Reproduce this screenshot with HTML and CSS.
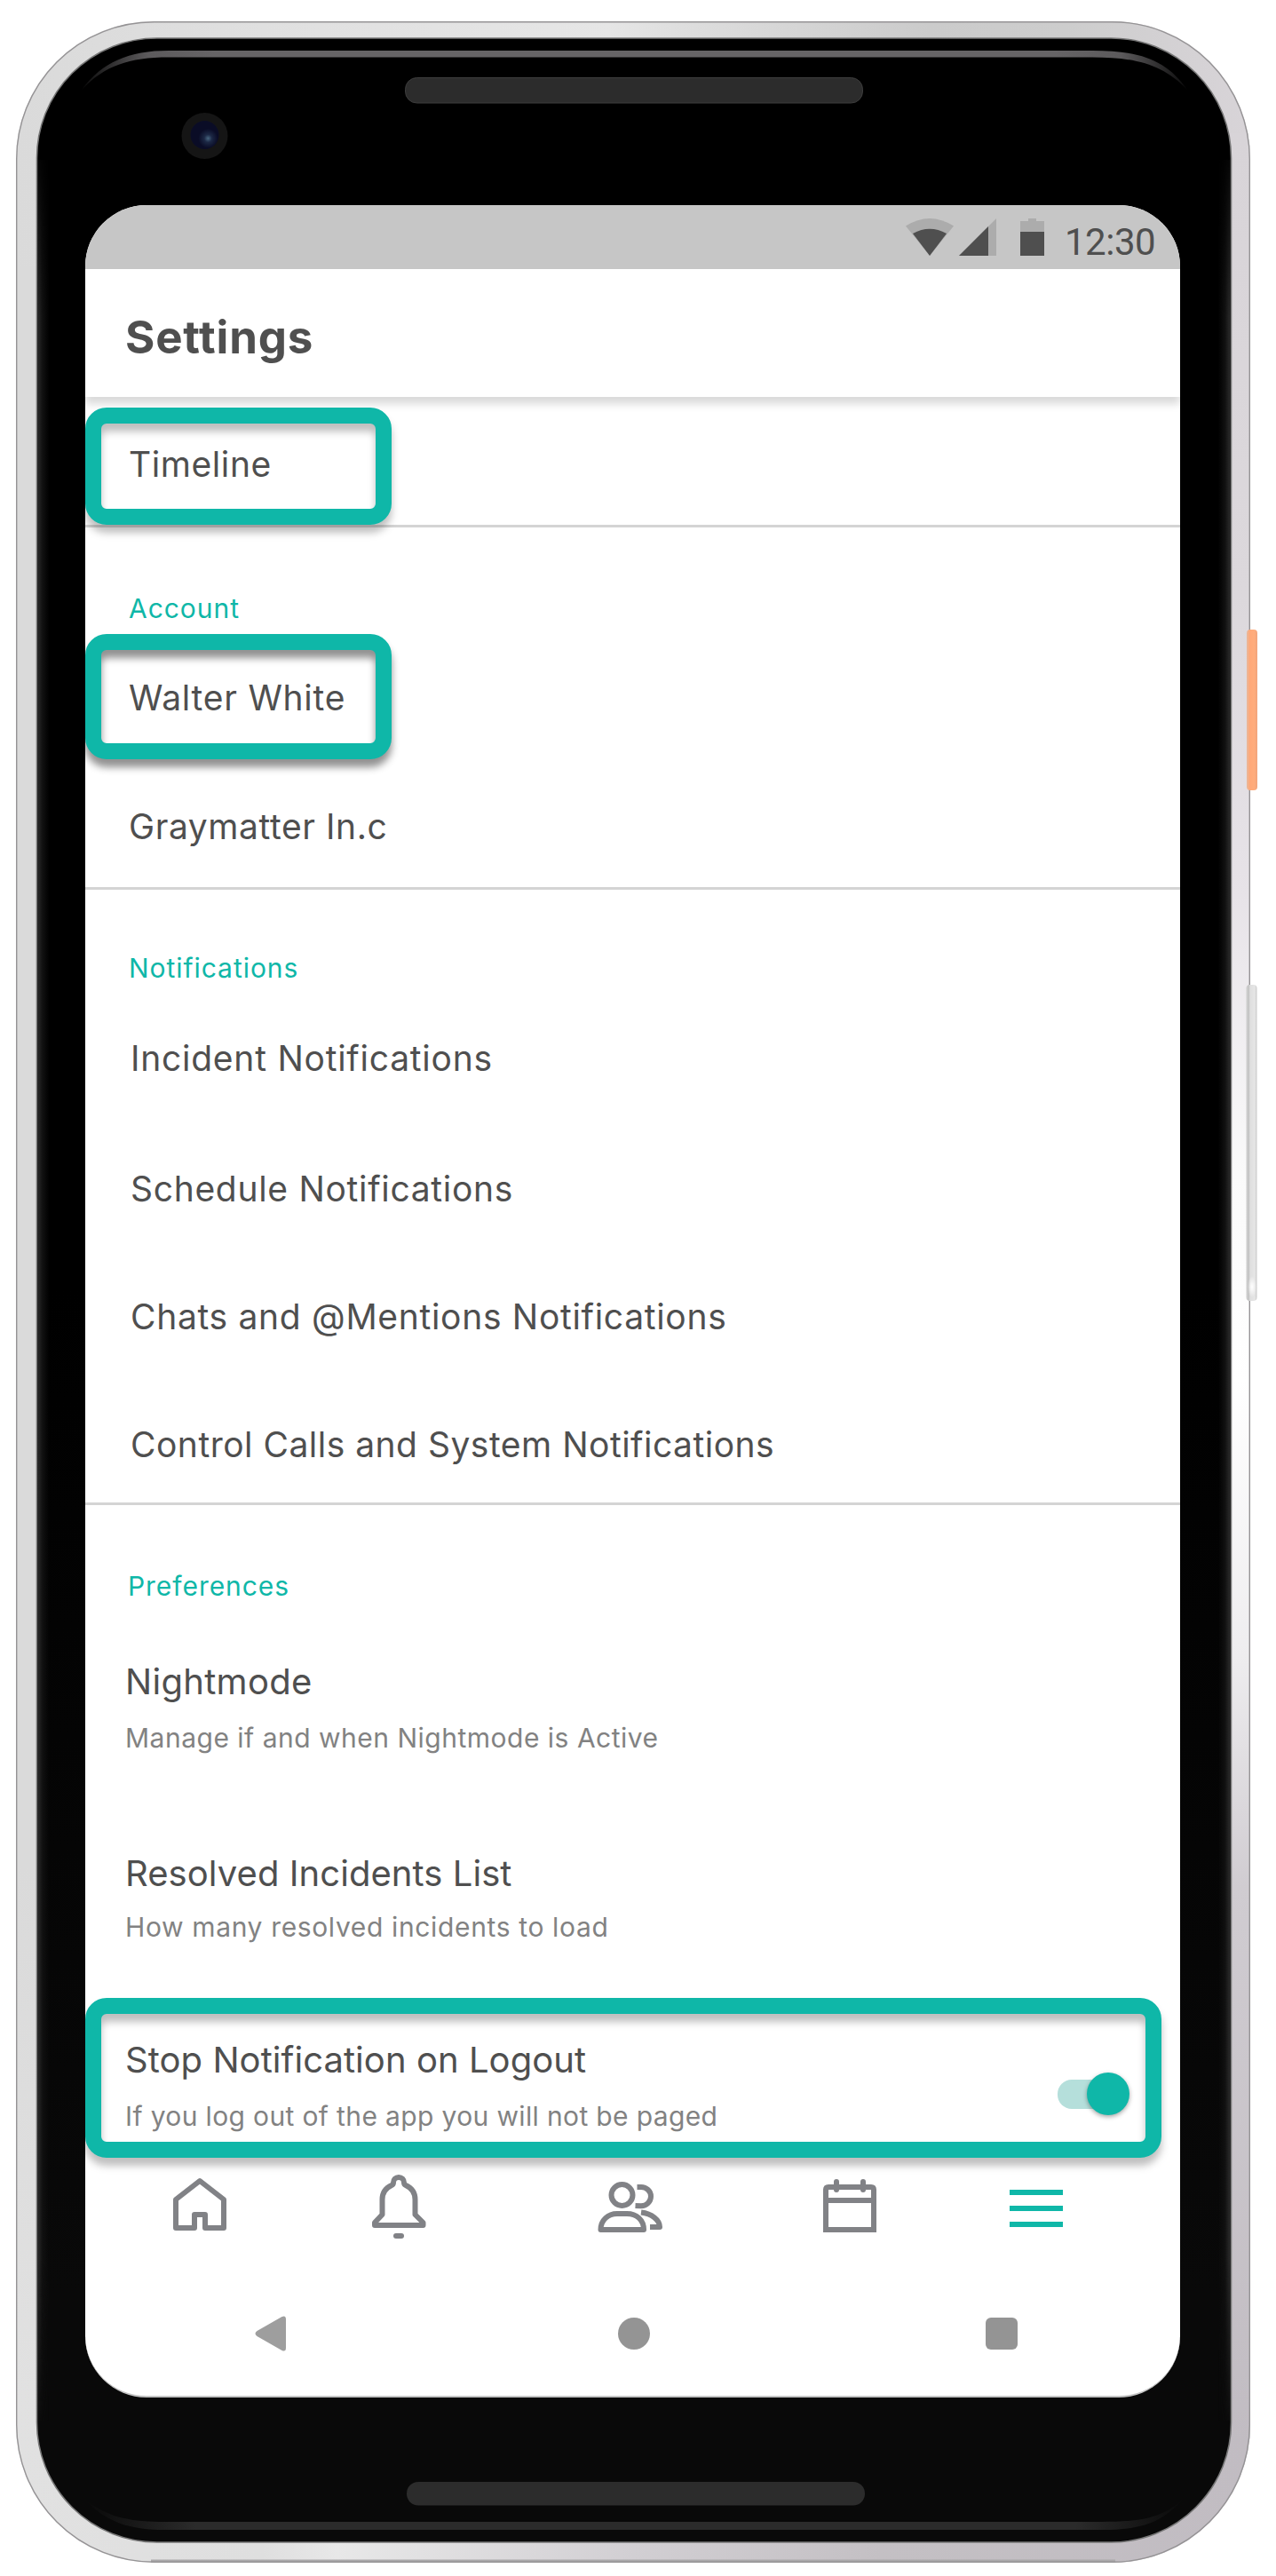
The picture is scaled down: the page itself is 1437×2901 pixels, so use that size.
FILE: index.html
```html
<!DOCTYPE html>
<html lang="en">
<head>
<meta charset="utf-8">
<title>Settings</title>
<link rel="stylesheet" href="styles.css">
</head>
<body>
<div class="device">
  <svg class="frame" width="1437" height="2901" viewBox="0 0 1437 2901" aria-hidden="true">
    <defs>
      <linearGradient id="metal" x1="0" x2="1" y1="0" y2="0">
        <stop offset="0" stop-color="#dadada"/><stop offset=".2" stop-color="#e0e0e0"/>
        <stop offset=".48" stop-color="#e6e6e6"/><stop offset=".54" stop-color="#dedede"/><stop offset=".74" stop-color="#cbcbcb"/>
        <stop offset=".85" stop-color="#cdcdcd"/><stop offset="1" stop-color="#d8d4d8"/>
      </linearGradient>
      <linearGradient id="metalBottom" x1="0" x2="1" y1="0" y2="0">
        <stop offset="0" stop-color="#e1e1e1"/><stop offset=".2" stop-color="#dfdfdf"/>
        <stop offset=".26" stop-color="#e8e8e8"/><stop offset=".5" stop-color="#d2cfd3"/>
        <stop offset=".7" stop-color="#c4c0c4"/><stop offset="1" stop-color="#c1bcc2"/>
      </linearGradient>
      <linearGradient id="sideLeft" gradientUnits="userSpaceOnUse" x1="0" x2="0" y1="300" y2="2700">
        <stop offset="0" stop-color="#dadada"/><stop offset=".75" stop-color="#dadada"/><stop offset="1" stop-color="#e1e1e1"/>
      </linearGradient>
      <linearGradient id="side" gradientUnits="userSpaceOnUse" x1="0" x2="0" y1="150" y2="2750">
        <stop offset="0" stop-color="#d8d4d8"/><stop offset=".2" stop-color="#dcd8dc"/>
        <stop offset=".33" stop-color="#e7e3e8"/><stop offset=".45" stop-color="#fafafa"/>
        <stop offset=".54" stop-color="#ffffff"/><stop offset=".66" stop-color="#eeedef"/><stop offset=".76" stop-color="#d0ccd1"/>
        <stop offset="1" stop-color="#c1bcc2"/>
      </linearGradient>
      <linearGradient id="glass" gradientUnits="userSpaceOnUse" x1="0" x2="0" y1="43" y2="2863">
        <stop offset="0" stop-color="#000"/><stop offset=".5" stop-color="#000"/><stop offset=".9" stop-color="#090909"/><stop offset="1" stop-color="#090909"/>
      </linearGradient>
      <linearGradient id="edgeL" x1="0" x2="1" y1="0" y2="0">
        <stop offset="0" stop-color="#2a2a2a"/><stop offset=".4" stop-color="#111"/><stop offset="1" stop-color="#111" stop-opacity="0"/>
      </linearGradient>
      <linearGradient id="edgeR" x1="1" x2="0" y1="0" y2="0">
        <stop offset="0" stop-color="#2a2a2a"/><stop offset=".4" stop-color="#111"/><stop offset="1" stop-color="#111" stop-opacity="0"/>
      </linearGradient>
      <linearGradient id="shine" gradientUnits="userSpaceOnUse" x1="92" x2="1337" y1="0" y2="0">
        <stop offset="0" stop-color="#666466" stop-opacity=".1"/><stop offset=".06" stop-color="#5c5a5c"/><stop offset=".12" stop-color="#666466"/>
        <stop offset=".88" stop-color="#666466"/><stop offset=".94" stop-color="#5c5a5c"/><stop offset="1" stop-color="#666466" stop-opacity=".1"/>
      </linearGradient>
      <linearGradient id="shineLow" gradientUnits="userSpaceOnUse" x1="96" x2="1335" y1="0" y2="0">
        <stop offset="0" stop-color="#2b2b2b" stop-opacity="0"/><stop offset=".1" stop-color="#2b2b2b"/>
        <stop offset=".9" stop-color="#2b2b2b"/><stop offset="1" stop-color="#2b2b2b" stop-opacity="0"/>
      </linearGradient>
      <linearGradient id="fade" x1="0" x2="0" y1="0" y2="1">
        <stop offset="0" stop-color="#000"/><stop offset=".08" stop-color="#fff"/><stop offset=".92" stop-color="#fff"/><stop offset="1" stop-color="#000"/>
      </linearGradient>
      <mask id="fadeEnds" maskUnits="userSpaceOnUse" x="30" y="150" width="1370" height="2600">
        <rect x="30" y="150" width="1370" height="2600" fill="url(#fade)"/>
      </mask>
      <linearGradient id="orange" x1="0" x2="1" y1="0" y2="0">
        <stop offset="0" stop-color="#e8b89c"/><stop offset=".3" stop-color="#ffa877"/><stop offset=".7" stop-color="#ffac7c"/><stop offset="1" stop-color="#f0a47c"/>
      </linearGradient>
      <linearGradient id="silver" x1="0" x2="1" y1="0" y2="0">
        <stop offset="0" stop-color="#d0d0d0"/><stop offset=".25" stop-color="#c4c4c4"/><stop offset=".35" stop-color="#dedede"/><stop offset=".8" stop-color="#e6e6e6"/><stop offset="1" stop-color="#c8c8c8"/>
      </linearGradient>
      <radialGradient id="tip"><stop offset="0" stop-color="#fff"/><stop offset="1" stop-color="#fff" stop-opacity="0"/></radialGradient>
      <radialGradient id="glint" cx=".62" cy=".62" r=".34">
        <stop offset="0" stop-color="#48667f"/><stop offset=".4" stop-color="#1c2845"/><stop offset="1" stop-color="#0a0c26"/>
      </radialGradient>
      <clipPath id="body"><rect x="18" y="24" width="1390" height="2862" rx="155"/></clipPath>
    </defs>
    <g clip-path="url(#body)">
      <rect x="18" y="24" width="1390" height="1400" fill="url(#metal)"/>
      <rect x="18" y="1424" width="1390" height="1462" fill="url(#metalBottom)"/>
      <rect x="18" y="300" width="30" height="2400" fill="url(#sideLeft)"/>
      <rect x="1370" y="150" width="38" height="2600" fill="url(#side)"/>
      <rect x="170" y="2882.5" width="1086" height="4" fill="#aaa8aa"/>
    </g>
    <rect x="18.7" y="24.7" width="1388.6" height="2860.6" rx="154.5" fill="none" stroke="#959395" stroke-width="1.4"/>
    <rect x="41.5" y="43" width="1345" height="2820" rx="135" fill="url(#glass)" stroke="#777" stroke-width="1.6"/>
    <g mask="url(#fadeEnds)">
      <rect x="42.5" y="180" width="13" height="2546" fill="url(#edgeL)"/>
      <rect x="1372" y="180" width="13" height="2546" fill="url(#edgeR)"/>
    </g>
    <path d="M92 101C115 70 145 57 190 57H1230C1285 57 1314 68 1337 101C1310 73 1280 64.500 1230 64.500H190C145 64.500 118 74 92 101Z" fill="url(#shine)"/>
    <path d="M96 2815C122 2836 150 2840 185 2840H1240C1285 2840 1310 2836 1335 2812C1308 2842 1285 2849 1240 2849H185C150 2849 120 2842 96 2815Z" fill="url(#shineLow)"/>
    <rect x="456.500" y="87.500" width="515" height="28.500" rx="13" fill="#2c2c2c" stroke="#3c3c3c"/>
    <rect x="458" y="2795" width="516" height="26.500" rx="13" fill="#2c2c2c"/>
    <circle cx="230.500" cy="153" r="26" fill="#151515"/>
    <circle cx="230.500" cy="152" r="16" fill="url(#glint)"/>
    <rect x="1404" y="709" width="12" height="181" rx="4" fill="url(#orange)"/>
    <rect x="1403.500" y="1109" width="12" height="356" rx="4" fill="url(#silver)"/>
    <ellipse cx="1410" cy="1449" rx="5" ry="12" fill="url(#tip)"/>
  </svg>

  <main class="screen">
    <div class="status-bar">
      <svg class="status-icons" width="158" height="42" viewBox="0 0 158 42" aria-hidden="true">
        <path d="M0 8.500Q27 -8.500 54 8.500L27 42Z" fill="#acacac"/>
        <path d="M8 17Q27 6.500 46 17L27 42Z" fill="#4f4f4f"/>
        <path d="M102 0V42H60Z" fill="#acacac"/>
        <path d="M93 9V42H60Z" fill="#4f4f4f"/>
        <path d="M138 0h9v3h9v12h-27V3h9Z" fill="#acacac"/>
        <path d="M129 15h27v27h-27Z" fill="#4f4f4f"/>
      </svg>
      <span class="clock">12:30</span>
    </div>

    <header class="app-header"><h1>Settings</h1></header>

    <section class="group group-first">
      <div class="item tight">Timeline</div>
    </section>

    <section class="group group-account">
      <h2>Account</h2>
      <div class="item">Walter White</div>
      <div class="item tight">Graymatter In.c</div>
    </section>

    <section class="group group-notifications">
      <h2>Notifications</h2>
      <div class="item">Incident Notifications</div>
      <div class="item">Schedule Notifications</div>
      <div class="item">Chats and @Mentions Notifications</div>
      <div class="item snug">Control Calls and System Notifications</div>
    </section>

    <section class="group group-preferences">
      <h2>Preferences</h2>
      <div class="pref">
        <div class="pref-title airy">Nightmode</div>
        <div class="pref-note">Manage if and when Nightmode is Active</div>
      </div>
      <div class="pref pref-list">
        <div class="pref-title">Resolved Incidents List</div>
        <div class="pref-note airy">How many resolved incidents to load</div>
      </div>
      <div class="pref pref-switch">
        <div>
          <div class="pref-title">Stop Notification on Logout</div>
          <div class="pref-note close">If you log out of the app you will not be paged</div>
        </div>
        <div class="switch"><span class="knob"></span></div>
      </div>
    </section>

    <nav class="tabs">
      <svg class="tab home" width="60" height="60" viewBox="0 0 60 60"><path d="M3 25L30 4L57 25V57H36V42H24V57H3Z"/></svg>
      <svg class="tab bell" width="62" height="72" viewBox="0 0 62 72"><path d="M31 3C27.500 3 25 5.500 25 9C25 10.500 24.500 11.300 23 12C16.500 15 12.500 20.500 12.500 28V45L4 54V57H58.500V54L49.500 45V28C49.500 20.500 45.500 15 39 12C37.500 11.300 37 10.500 37 9C37 5.500 34.500 3 31 3Z"/><path d="M28 69H34" stroke-linecap="round"/></svg>
      <svg class="tab people" width="74" height="58" viewBox="0 0 74 58"><circle cx="27.500" cy="15" r="12"/><path d="M44.500 6H49C55 6 60 10.500 60 16.500S55 27.300 49 27.300L42.500 27"/><path d="M3.500 54C3.500 43 12 36 22 36H33C44 36 52 43 52 54Z"/><path d="M49 34.500C61 36 70 43 70 51H59"/></svg>
      <svg class="tab calendar" width="60" height="60" viewBox="0 0 60 60"><path d="M3 57V12Q3 9 6 9H54Q57 9 57 12V57Z" stroke-linejoin="miter"/><path d="M3 24H57"/><path d="M15 3V12M45 3V12" stroke-linecap="round"/></svg>
      <svg class="tab menu" width="60" height="42" viewBox="0 0 60 42"><path d="M0 3H60M0 21H60M0 39H60"/></svg>
    </nav>

    <div class="system-nav">
      <svg width="36" height="40" viewBox="0 0 36 40"><path d="M35 4V36Q35 41 30.500 39L2.500 23Q-1.500 20 2.500 17L30.500 1Q35 -1 35 4Z" fill="#9e9e9e"/></svg>
      <span class="nav-home"></span>
      <span class="nav-recent"></span>
    </div>

    <div class="highlight hl-timeline"></div>
    <div class="highlight hl-user"></div>
    <div class="highlight hl-logout"></div>
  </main>
</div>
</body>
</html>
```
FILE: styles.css
```css
* { box-sizing: border-box; }

body {
  margin: 0;
  background: #fff;
  color: #4f4f4f;
  font-family: Inter, "Liberation Sans", sans-serif;
}

.device {
  position: relative;
  width: 1437px;
  height: 2901px;
  padding: 231px 108px 0 96px;
  overflow: hidden;
}

.frame {
  position: absolute;
  inset: 0;
}

.screen {
  position: relative;
  width: 1233px;
  height: 2469px;
  display: flex;
  flex-direction: column;
  overflow: hidden;
  border-radius: 69px;
  border-bottom: 2px solid #c4c4c4;
  background: #fff;
}

.status-bar {
  flex: none;
  height: 72px;
  display: flex;
  align-items: flex-start;
  padding: 15px 0 0 924px;
  background: #c6c6c6;
}

.clock {
  margin: 6px 0 0 21px;
  font: 42px/42px Roboto, sans-serif;
  letter-spacing: -0.5px;
}

.app-header {
  flex: none;
  height: 144px;
  padding: 46px 45px 0;
  background: #fff;
  box-shadow: 0 8px 9px rgba(0, 0, 0, .15);
  position: relative;
}

h1 {
  margin: 0;
  font-size: 51px;
  line-height: 62px;
  font-weight: 700;
  letter-spacing: .8px;
}

.group {
  flex: none;
  padding-left: 49px;
  border-bottom: 3px solid #d4d4d4;
}

.group-first { height: 147px; padding-top: 52px; }
.group-account { height: 408px; padding-top: 73px; }
.group-notifications { height: 693px; padding-top: 70px; }
.group-preferences { height: 735px; padding: 73px 0 0 45px; border: 0; }

h2 {
  margin: 0 0 59px;
  color: #0fb7a8;
  font-size: 30px;
  line-height: 36px;
  font-weight: 400;
  letter-spacing: .95px;
}

.item {
  font-size: 39px;
  line-height: 48px;
  letter-spacing: .75px;
  white-space: nowrap;
}

.item + .item { margin-top: 97px; }
.item.tight { letter-spacing: .58px; }

.group-notifications h2 { margin-bottom: 60px; }
.group-notifications .item { margin-top: 96px; text-indent: 2px; }
.group-notifications h2 + .item { margin-top: 0; }
.group-notifications .item:nth-child(3) { margin-top: 99px; }
.group-notifications .item:nth-child(n+3) { letter-spacing: .69px; }
.group-notifications .item.snug { letter-spacing: .49px; }

.group-preferences h2 { margin-bottom: 66px; text-indent: 3px; }

.pref-title {
  font-size: 40px;
  line-height: 48px;
  letter-spacing: .06px;
  white-space: nowrap;
}

.pref-title.airy { letter-spacing: .3px; }

.pref-note {
  margin-top: 21px;
  color: #828282;
  font-size: 30px;
  line-height: 36px;
  letter-spacing: .5px;
  white-space: nowrap;
}

.pref-note.airy { margin-top: 18px; letter-spacing: .64px; }
.pref-note.close { letter-spacing: .36px; }

.pref-list { margin-top: 111px; }

.pref-switch {
  margin-top: 108px;
  padding-right: 57px;
  display: flex;
  justify-content: space-between;
}

.switch {
  width: 81px;
  height: 48px;
  margin-top: 38px;
  display: flex;
  align-items: center;
  justify-content: flex-end;
}

.switch::before {
  content: "";
  flex: none;
  width: 66px;
  height: 33px;
  margin-right: -33px;
  border-radius: 16px;
  background: #b5dfdb;
}

.knob {
  flex: none;
  width: 48px;
  height: 48px;
  border-radius: 50%;
  background: #0fb7a8;
  box-shadow: 0 2px 5px rgba(0, 0, 0, .35);
}

.tabs {
  flex: none;
  height: 136px;
  display: grid;
  grid-template-columns: 223px 255px 254px 210px auto;
  padding: 19px 0 0 99px;
  align-items: start;
}

.tab {
  overflow: visible;
  fill: none;
  stroke: #818286;
  stroke-width: 6px;
  stroke-linejoin: round;
}

.home { margin-top: 3px; }
.people { margin-top: 8px; }
.calendar { margin-top: 5px; }
.menu { margin-top: 17px; stroke: #0fb7a8; }

.system-nav {
  flex: none;
  display: grid;
  grid-template-columns: 409px 414px auto;
  align-items: center;
  padding: 42px 0 0 191px;
}

.nav-home, .nav-recent {
  width: 36px;
  height: 36px;
  background: #949494;
}

.nav-home { border-radius: 50%; }
.nav-recent { border-radius: 6px; }

/* Callout frames laid over the list */
.highlight {
  position: absolute;
  left: 0;
  width: 345px;
  border: 18px solid #0fb7a8;
  border-radius: 24px;
  filter: drop-shadow(0 9px 4px rgba(0, 0, 0, .25));
}

.hl-timeline { top: 228px; height: 132px; }
.hl-user { top: 483px; height: 141px; filter: drop-shadow(0 9px 4px rgba(0, 0, 0, .43)); }
.hl-logout { top: 2019px; width: 1212px; height: 180px; }
```
